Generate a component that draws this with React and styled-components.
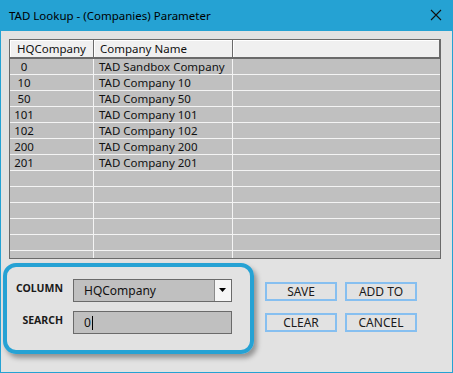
import React from "react";
import styled, { createGlobalStyle } from "styled-components";

const GlobalStyle = createGlobalStyle`
  html, body {
    margin: 0;
    padding: 0;
    background: #e2e2e2;
  }
  * {
    box-sizing: border-box;
  }
`;

const rows = [
  { id: "0", name: "TAD Sandbox Company" },
  { id: "10", name: "TAD Company 10" },
  { id: "50", name: "TAD Company 50" },
  { id: "101", name: "TAD Company 101" },
  { id: "102", name: "TAD Company 102" },
  { id: "200", name: "TAD Company 200" },
  { id: "201", name: "TAD Company 201" },
  { id: "", name: "" },
  { id: "", name: "" },
  { id: "", name: "" },
  { id: "", name: "" },
  { id: "", name: "" },
  { id: "", name: "" },
];

const Window = styled.div`
  width: 453px;
  height: 373px;
  border: 1px solid #25a2d3;
  border-top: 0;
  background: #e2e2e2;
  display: flex;
  flex-direction: column;
  font-family: "Noto Sans", "Open Sans", sans-serif;
  color: #000;
`;

const TitleBar = styled.div`
  height: 31px;
  flex: none;
  background: #25a2d3;
  display: flex;
  align-items: center;
  justify-content: space-between;
  padding: 0 9px 1px 8px;
  font-size: 11.5px;
  color: #000;
`;

const CloseButton = styled.svg`
  width: 12px;
  height: 12px;
  margin-right: 1px;
`;

const Body = styled.div`
  flex: 1;
  padding: 8px 12px 0 2px;
  display: flex;
  flex-direction: column;
`;

const Grid = styled.div`
  margin-left: 6px;
  width: 432px;
  height: 220px;
  border: 1px solid #6a6a6a;
  overflow: hidden;
  background: #c0c0c0;
  font-size: 11.5px;
  color: #111;
`;

const Cols = styled.div`
  display: grid;
  grid-template-columns: 84px 139px 1fr;
`;

const HeaderCell = styled.div`
  height: 19px;
  background: #f0f0f0;
  border-right: 1px solid #6a6a6a;
  border-bottom: 2px solid #6a6a6a;
  box-shadow: inset 1px 1px 0 #ffffff;
  padding-left: ${(p) => p.$pad}px;
  line-height: 17px;
  white-space: nowrap;
  &:last-child {
    border-right: 0;
  }
`;

const Cell = styled.div`
  height: 16px;
  border-right: 1px solid #f4f4f4;
  border-bottom: 1px solid #f4f4f4;
  padding-left: ${(p) => p.$pad}px;
  line-height: 15px;
  white-space: nowrap;
  &:nth-child(3n) {
    border-right: 0;
  }
`;

const IdText = styled.span`
  display: inline-block;
  width: 20px;
  text-align: center;
`;

const Bottom = styled.div`
  display: flex;
  align-items: flex-start;
  margin-top: 4px;
`;

const Highlight = styled.div`
  width: 251px;
  height: 91px;
  border: 4px solid #26a2d4;
  border-radius: 13px;
  box-shadow: 3px 4px 5px rgba(0, 0, 0, 0.35);
  padding: 12px 18px 0 8px;
  display: grid;
  grid-template-columns: 48px 1fr;
  column-gap: 10px;
  row-gap: 9px;
  align-items: start;
  align-content: start;
`;

const Label = styled.div`
  text-align: right;
  font-size: 10.5px;
  font-weight: bold;
  line-height: 12px;
  padding-top: ${(p) => p.$top}px;
  color: #1a1a1a;
  white-space: nowrap;
`;

const Field = styled.div`
  height: 23px;
  background: #c0c0c0;
  border: 1px solid #6a6a6a;
  display: flex;
  align-items: center;
  padding-left: 10px;
  font-size: 12px;
  color: #111;
`;

const DropButton = styled.div`
  margin-left: auto;
  width: 17px;
  height: 21px;
  background: #f6f6f6;
  border-left: 1px solid #8a8a8a;
  display: flex;
  align-items: center;
  justify-content: center;
`;

const Caret = styled.span`
  display: inline-block;
  width: 1px;
  height: 14px;
  background: #000;
  margin-left: 1px;
`;

const Buttons = styled.div`
  margin-left: 11px;
  margin-top: 19px;
  display: grid;
  grid-template-columns: 72px 72px;
  column-gap: 8px;
  row-gap: 12px;
`;

const Button = styled.div`
  height: 19px;
  border: 2px solid #86bff0;
  display: flex;
  align-items: center;
  justify-content: center;
  font-size: 12px;
  color: #1a1a1a;
`;

export default function App() {
  return (
    <>
      <GlobalStyle />
      <Window>
        <TitleBar>
          <span>TAD Lookup - (Companies) Parameter</span>
          <CloseButton viewBox="0 0 12 12">
            <path d="M1 1 L11 11 M11 1 L1 11" stroke="#111" strokeWidth="1.1" fill="none" />
          </CloseButton>
        </TitleBar>
        <Body>
          <Grid>
            <Cols>
              <HeaderCell $pad={7}>HQCompany</HeaderCell>
              <HeaderCell $pad={6}>Company Name</HeaderCell>
              <HeaderCell $pad={0} />
              {rows.map((r, i) => (
                <React.Fragment key={i}>
                  <Cell $pad={4}>
                    <IdText>{r.id}</IdText>
                  </Cell>
                  <Cell $pad={5}>{r.name}</Cell>
                  <Cell $pad={0} />
                </React.Fragment>
              ))}
            </Cols>
          </Grid>
          <Bottom>
            <Highlight>
              <Label $top={3}>COLUMN</Label>
              <Field>
                HQCompany
                <DropButton>
                  <svg width="8" height="5" viewBox="0 0 8 5">
                    <path d="M0 0 H7 L3.5 4 Z" fill="#000" />
                  </svg>
                </DropButton>
              </Field>
              <Label $top={3}>SEARCH</Label>
              <Field>
                0<Caret />
              </Field>
            </Highlight>
            <Buttons>
              <Button>SAVE</Button>
              <Button>ADD TO</Button>
              <Button>CLEAR</Button>
              <Button>CANCEL</Button>
            </Buttons>
          </Bottom>
        </Body>
      </Window>
    </>
  );
}
